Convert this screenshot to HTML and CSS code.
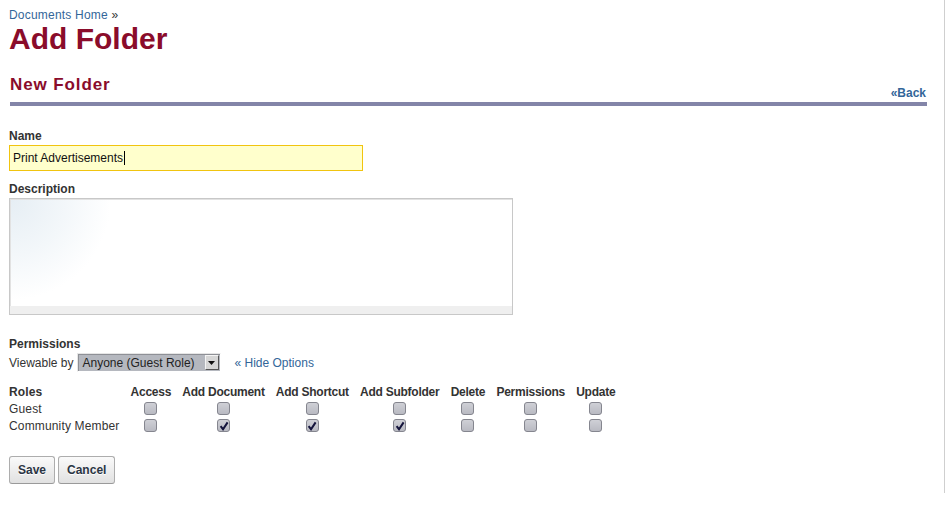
FILE: index.html
```html
<!DOCTYPE html>
<html>
<head>
<meta charset="utf-8">
<title>Add Folder</title>
<link rel="stylesheet" href="styles.css">
</head>
<body>
<div class="page">
  <div class="crumb"><a href="#" class="link">Documents Home</a> »</div>
  <h1 class="title">Add Folder</h1>
  <div class="section-head">
    <h2 class="section-title">New Folder</h2>
    <a href="#" class="back">«Back</a>
  </div>

  <div class="form">
    <div class="label label-name">Name</div>
    <div class="text-input">Print Advertisements<span class="caret"></span></div>

    <div class="label label-desc">Description</div>
    <div class="textarea"><div class="textarea-body"></div><div class="textarea-foot"></div></div>

    <div class="label label-perm">Permissions</div>
    <div class="viewable">
      <span class="viewable-text">Viewable by</span>
      <div class="select">
        <span class="select-value">Anyone (Guest Role)</span>
        <span class="select-btn"><svg width="7" height="4" viewBox="0 0 7 4"><path d="M0 0H7L3.5 4Z" fill="#111"/></svg></span>
      </div>
      <a href="#" class="link hide-opts">« Hide Options</a>
    </div>

    <table class="roles">
      <thead>
        <tr>
          <th class="role-col">Roles</th>
          <th>Access</th>
          <th>Add Document</th>
          <th>Add Shortcut</th>
          <th>Add Subfolder</th>
          <th>Delete</th>
          <th>Permissions</th>
          <th>Update</th>
        </tr>
      </thead>
      <tbody>
        <tr>
          <td class="role-col">Guest</td>
          <td><span class="cb"></span></td>
          <td><span class="cb"></span></td>
          <td><span class="cb"></span></td>
          <td><span class="cb"></span></td>
          <td><span class="cb"></span></td>
          <td><span class="cb"></span></td>
          <td><span class="cb"></span></td>
        </tr>
        <tr>
          <td class="role-col">Community Member</td>
          <td><span class="cb"></span></td>
          <td><span class="cb"><svg class="tick" width="10" height="10" viewBox="0 0 10 10"><path d="M1.6 5.2 L4 8.2 L8.6 1.4" fill="none" stroke="#14143c" stroke-width="2"/></svg></span></td>
          <td><span class="cb"><svg class="tick" width="10" height="10" viewBox="0 0 10 10"><path d="M1.6 5.2 L4 8.2 L8.6 1.4" fill="none" stroke="#14143c" stroke-width="2"/></svg></span></td>
          <td><span class="cb"><svg class="tick" width="10" height="10" viewBox="0 0 10 10"><path d="M1.6 5.2 L4 8.2 L8.6 1.4" fill="none" stroke="#14143c" stroke-width="2"/></svg></span></td>
          <td><span class="cb"></span></td>
          <td><span class="cb"></span></td>
          <td><span class="cb"></span></td>
        </tr>
      </tbody>
    </table>

    <div class="buttons">
      <button class="btn" type="button">Save</button>
      <button class="btn" type="button">Cancel</button>
    </div>
  </div>
</div>
</body>
</html>
```

FILE: styles.css
```css
html, body {
  margin: 0;
  padding: 0;
  background: #fff;
}
body {
  font-family: "Liberation Sans", Arial, sans-serif;
  font-size: 12px;
  line-height: 14px;
  color: #333;
}
.page {
  box-sizing: border-box;
  width: 945px;
  height: 493px;
  padding: 8px 17px 0 9px;
  border-right: 1px solid #cfcfcf;
}
.link {
  color: #336699;
  text-decoration: none;
}
.crumb {
  color: #333;
  letter-spacing: 0.2px;
}
.title {
  margin: 1px 0 0 0;
  font-size: 30px;
  line-height: 32px;
  font-weight: bold;
  color: #8a0c2b;
}
.section-head {
  display: flex;
  justify-content: space-between;
  align-items: flex-end;
  margin: 20px 0 0 1px;
  border-bottom: 4px solid #8385a8;
}
.section-title {
  margin: 0 0 7px 0;
  font-size: 17px;
  line-height: 20px;
  letter-spacing: 0.9px;
  font-weight: bold;
  color: #8a0c2b;
}
.back {
  margin: 0 1px 2px 0;
  font-weight: bold;
  color: #336699;
  text-decoration: none;
}
.label {
  font-weight: bold;
  color: #333;
  margin-bottom: 2px;
}
.label-name {
  margin-top: 23px;
}
.label-desc {
  margin-top: 11px;
}
.label-perm {
  margin-top: 22px;
}
.text-input {
  box-sizing: border-box;
  width: 354px;
  height: 26px;
  padding: 5px 3px;
  border: 1px solid #f1c40f;
  background: #ffffcc;
  color: #111;
}
.caret {
  display: inline-block;
  width: 1px;
  height: 14px;
  background: #000;
  vertical-align: top;
  margin-left: 1px;
}
.textarea {
  box-sizing: border-box;
  width: 504px;
  height: 117px;
  border: 1px solid #c8c8c8;
  display: flex;
  flex-direction: column;
  box-shadow: inset 1px 1px 0 #e2e2e2;
}
.textarea-body {
  flex: 1;
  margin: 1px 0 0 1px;
  background: radial-gradient(circle at 0 0, #e6eef4 0, #f3f7fa 55px, #fff 100px);
}
.textarea-foot {
  height: 8px;
  background: #efefef;
}
.viewable {
  display: flex;
  align-items: center;
  height: 19px;
}
.viewable-text {
  margin-right: 3px;
}
.select {
  box-sizing: border-box;
  width: 144px;
  height: 19px;
  display: flex;
  align-items: center;
  border: 1px solid #e6e6e6;
  border-right-color: #fff;
  border-bottom-color: #fff;
  background: #b5b8bf;
  box-shadow: inset 1px 1px 0 #8e9096;
  padding-left: 5px;
  color: #222;
}
.select-value {
  flex: 1;
}
.select-btn {
  box-sizing: border-box;
  width: 14px;
  height: 15px;
  margin-right: 1px;
  display: flex;
  align-items: center;
  justify-content: center;
  background: #d6d6d6;
  border-top: 1px solid #f4f4f4;
  border-left: 1px solid #f4f4f4;
  border-right: 1px solid #555;
  border-bottom: 1px solid #555;
}
.hide-opts {
  margin-left: 14px;
}
.roles {
  margin-top: 12px;
  border-collapse: collapse;
  border-spacing: 0;
}
.roles th, .roles td {
  padding: 0 5.6px;
  height: 17px;
  line-height: 17px;
  text-align: center;
  white-space: nowrap;
}
.roles th {
  font-weight: bold;
  color: #333;
  letter-spacing: -0.25px;
}
.roles .role-col {
  text-align: left;
  padding: 0;
  width: 116px;
  letter-spacing: 0.15px;
}
.cb {
  box-sizing: border-box;
  display: inline-block;
  width: 13px;
  height: 13px;
  border: 1px solid #85868f;
  border-radius: 3px;
  background: linear-gradient(#cfd0d6, #b9bac2);
  vertical-align: middle;
  position: relative;
  top: -1px;
}
.tick {
  display: block;
  margin: 1px 0 0 0.5px;
}
.buttons {
  display: flex;
  gap: 3px;
  margin-top: 21px;
}
.btn {
  box-sizing: border-box;
  height: 28px;
  padding: 0 8px;
  border: 1px solid #adadad;
  border-bottom-color: #9a9a9a;
  border-radius: 3px;
  background: linear-gradient(#fafafa, #e1e1e1);
  font-family: "Liberation Sans", Arial, sans-serif;
  font-size: 12px;
  font-weight: bold;
  color: #2b3544;
  text-shadow: 0 1px 0 #fff;
}
```
